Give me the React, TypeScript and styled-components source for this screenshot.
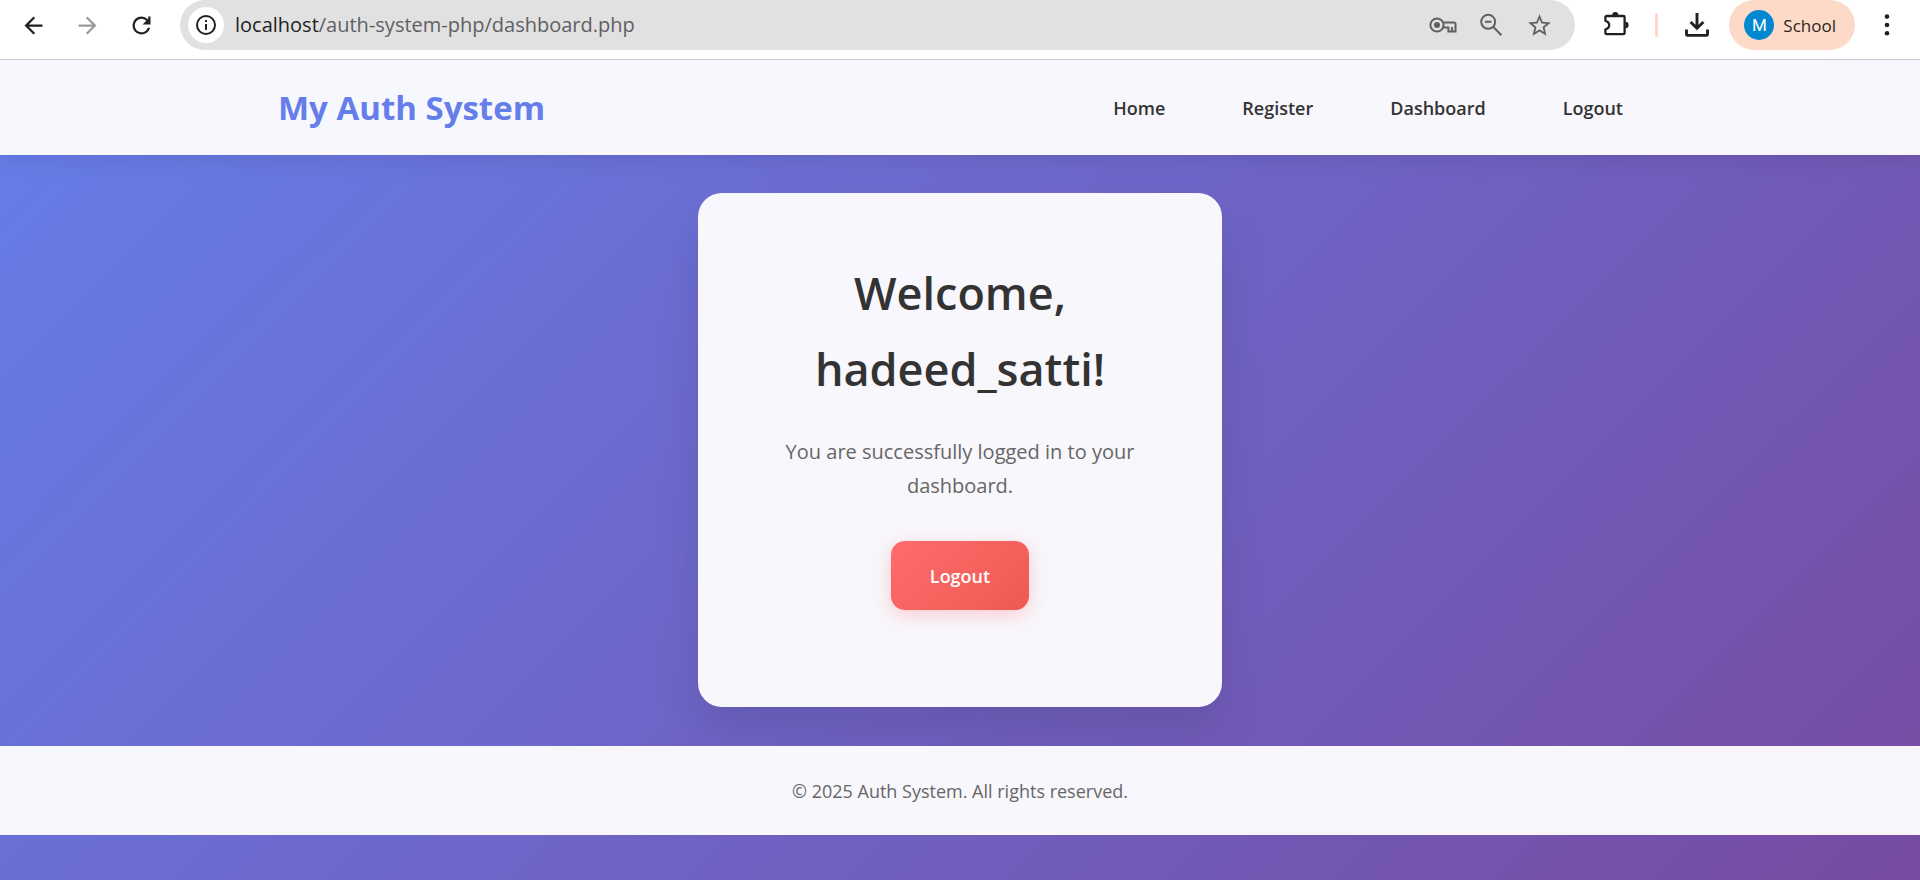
import React from "react";
import styled, { createGlobalStyle } from "styled-components";

const GlobalStyle = createGlobalStyle`
  * { box-sizing: border-box; margin: 0; padding: 0; }
  body {
    min-height: 100vh;
    font-family: "Open Sans", "Noto Sans", sans-serif;
    color: #333;
    background: #fff;
  }
  button { font: inherit; border: 0; background: none; cursor: pointer; }
  a { text-decoration: none; color: inherit; }
`;

const Browser = styled.div`
  min-height: 100vh;
  display: flex;
  flex-direction: column;
`;

const Toolbar = styled.div`
  position: relative;
  z-index: 1;
  height: 60px;
  padding: 0 19px 9px;
  display: flex;
  align-items: center;
  background: #fff;
  border-bottom: 1px solid #cbcbce;
`;

const ToolGroup = styled.div<{ $gap: number; $offset?: number }>`
  display: flex;
  align-items: center;
  gap: ${(p) => p.$gap}px;
  margin-left: ${(p) => p.$offset ?? 0}px;
`;

const IconButton = styled.button<{ $color?: string }>`
  display: flex;
  align-items: center;
  justify-content: center;
  width: 28px;
  height: 28px;
  color: ${(p) => p.$color ?? "#202124"};
`;

const AddressBar = styled.div`
  flex: 1;
  height: 50px;
  margin-left: 25px;
  padding: 0 22px 0 8px;
  display: flex;
  align-items: center;
  background: #e1e1e1;
  border-radius: 25px;
`;

const SiteInfo = styled.button`
  width: 36px;
  height: 36px;
  display: flex;
  align-items: center;
  justify-content: center;
  border-radius: 50%;
  background: #fff;
  color: #202124;
`;

const Url = styled.div`
  flex: 1;
  margin-left: 11px;
  font-size: 20px;
  line-height: 28px;
  color: #5f6063;
`;

const Host = styled.span`
  color: #1f1f1f;
`;

const Divider = styled.span`
  width: 3px;
  height: 24px;
  border-radius: 2px;
  background: #fddac7;
`;

const Profile = styled.button`
  height: 50px;
  padding: 0 19px 0 15px;
  display: flex;
  align-items: center;
  gap: 9px;
  border-radius: 25px;
  background: #fddac7;
  color: #2b2422;
  font-size: 17px;
`;

const Avatar = styled.span`
  width: 30px;
  height: 30px;
  display: flex;
  align-items: center;
  justify-content: center;
  border-radius: 50%;
  background: #0288d1;
  color: #fff;
  font-family: Roboto, sans-serif;
`;

const Page = styled.div`
  flex: 1;
  display: flex;
  flex-direction: column;
  background: linear-gradient(135deg, #667eea 0%, #764ba2 100%);
`;

const Header = styled.header`
  background: rgba(255, 255, 255, 0.95);
  box-shadow: 0 2px 24px rgba(0, 0, 0, 0.1);
`;

const HeaderInner = styled.div`
  max-width: 1440px;
  height: 95px;
  margin: 0 auto;
  padding: 0 38px;
  display: flex;
  align-items: center;
  justify-content: space-between;
`;

const Brand = styled.a`
  font-size: 33px;
  font-weight: 700;
  color: #667eea;
`;

const Nav = styled.nav`
  display: flex;
  gap: 39px;
`;

const NavLink = styled.a`
  padding: 8px 19px;
  font-size: 18px;
  font-weight: 600;
`;

const Main = styled.main`
  display: flex;
  justify-content: center;
  padding: 38px 38px 39px;
`;

const Card = styled.section`
  width: 524px;
  padding: 62px 77px 97px;
  display: flex;
  flex-direction: column;
  align-items: center;
  text-align: center;
  border-radius: 24px;
  background: rgba(255, 255, 255, 0.95);
  box-shadow: 0 24px 48px rgba(0, 0, 0, 0.1);
`;

const Title = styled.h1`
  font-size: 45px;
  line-height: 76px;
  font-weight: 600;
`;

const Message = styled.p`
  margin: 28px 0 38px;
  font-size: 20px;
  line-height: 34px;
  color: #666;
`;

const LogoutButton = styled.button`
  width: 138px;
  height: 69px;
  border-radius: 14px;
  background: linear-gradient(135deg, #ff6b6b, #ee5a52);
  box-shadow: 0 5px 18px rgba(255, 107, 107, 0.3);
  color: #fff;
  font-size: 18px;
  font-weight: 600;
`;

const Footer = styled.footer`
  height: 89px;
  display: flex;
  align-items: center;
  justify-content: center;
  background: rgba(255, 255, 255, 0.95);
  color: #666;
  font-size: 18px;
`;

const Icon = ({ size = 24, path }: { size?: number; path: string }) => (
  <svg width={size} height={size} viewBox="0 0 24 24" fill="currentColor" aria-hidden="true">
    <path d={path} />
  </svg>
);

const LineIcon = ({ weight = 2, children }: { weight?: number; children: React.ReactNode }) => (
  <svg
    width="28"
    height="28"
    viewBox="0 0 28 28"
    fill="none"
    stroke="currentColor"
    strokeWidth={weight}
    aria-hidden="true"
  >
    {children}
  </svg>
);

const KeyIcon = () => (
  <LineIcon>
    <circle cx="8" cy="14" r="6.6" />
    <circle cx="8" cy="14" r="3" fill="currentColor" stroke="none" />
    <path d="M14 11.4H25a1.5 1.5 0 0 1 1.5 1.5V20.6H19.4V16.4H14M23 20V16" />
  </LineIcon>
);

const ZoomOutIcon = () => (
  <LineIcon>
    <circle cx="11.2" cy="10.8" r="7" />
    <path d="M8 10.8h6.4M16.2 15.8l8.2 8.4" />
  </LineIcon>
);

const ExtensionsIcon = () => (
  <LineIcon weight={2.3}>
    <path
      strokeLinejoin="round"
      d="M4.6 5H21.4a1.2 1.2 0 0 1 1.2 1.2V21.9a1.2 1.2 0 0 1-1.2 1.2H4.6a1.2 1.2 0 0 1-1.2-1.2V18.4C6 17.8 7.2 16.2 7.2 14.1S6 10.4 3.4 9.8V6.2A1.2 1.2 0 0 1 4.6 5z"
    />
    <path fill="currentColor" stroke="none" d="M10.2 4.2a3.1 3.3 0 0 1 6.2 0zM23.4 10.8a3.2 3.3 0 0 1 0 6.6z" />
  </LineIcon>
);

const DownloadIcon = () => (
  <LineIcon weight={2.9}>
    <path d="M14 2v14.5M7.6 11l6.4 6.2 6.4-6.2M3.5 18.4v5a1 1 0 0 0 1 1h19a1 1 0 0 0 1-1v-5" />
  </LineIcon>
);

const MenuIcon = () => (
  <LineIcon>
    <g fill="currentColor" stroke="none">
      <circle cx="14" cy="5.6" r="2.3" />
      <circle cx="14" cy="14" r="2.3" />
      <circle cx="14" cy="22.2" r="2.3" />
    </g>
  </LineIcon>
);

const paths = {
  back: "M20 11H7.83l5.59-5.59L12 4l-8 8 8 8 1.41-1.41L7.83 13H20v-2z",
  forward: "M12 4l-1.41 1.41L16.17 11H4v2h12.17l-5.58 5.59L12 20l8-8z",
  reload: "M17.65 6.35A7.96 7.96 0 0 0 12 4a8 8 0 1 0 7.73 10h-2.08A6 6 0 1 1 12 6c1.66 0 3.14.69 4.22 1.78L13 11h7V4h-2v2.7z",
  info: "M11 7h2v2h-2zm0 4h2v6h-2zm1-9a10 10 0 1 0 0 20 10 10 0 0 0 0-20zm0 18a8 8 0 1 1 0-16 8 8 0 0 1 0 16z",
  star: "M22 9.24l-7.19-.62L12 2 9.19 8.63 2 9.24l5.46 4.73L5.82 21 12 17.27 18.18 21l-1.63-7.03zM12 15.4l-3.76 2.27 1-4.28-3.32-2.88 4.38-.38L12 6.1l1.71 4.04 4.38.38-3.32 2.88 1 4.28z",
};

const muted = "#5f6063";

export default function App() {
  return (
    <Browser>
      <GlobalStyle />
      <Toolbar>
        <ToolGroup $gap={26}>
          <IconButton aria-label="Back"><Icon size={27} path={paths.back} /></IconButton>
          <IconButton aria-label="Forward" $color="#9b9b9b"><Icon size={27} path={paths.forward} /></IconButton>
          <IconButton aria-label="Reload"><Icon size={27} path={paths.reload} /></IconButton>
        </ToolGroup>
        <AddressBar>
          <SiteInfo aria-label="Site information"><Icon path={paths.info} /></SiteInfo>
          <Url><Host>localhost</Host>/auth-system-php/dashboard.php</Url>
          <ToolGroup $gap={20}>
            <IconButton aria-label="Passwords" $color={muted}><KeyIcon /></IconButton>
            <IconButton aria-label="Zoom" $color={muted}><ZoomOutIcon /></IconButton>
            <IconButton aria-label="Bookmark" $color={muted}><Icon size={27} path={paths.star} /></IconButton>
          </ToolGroup>
        </AddressBar>
        <ToolGroup $gap={25} $offset={27}>
          <IconButton aria-label="Extensions"><ExtensionsIcon /></IconButton>
          <Divider />
          <IconButton aria-label="Downloads"><DownloadIcon /></IconButton>
        </ToolGroup>
        <ToolGroup $gap={18} $offset={18}>
          <Profile><Avatar>M</Avatar>School</Profile>
          <IconButton aria-label="Menu"><MenuIcon /></IconButton>
        </ToolGroup>
      </Toolbar>
      <Page>
        <Header>
          <HeaderInner>
            <Brand href="#">My Auth System</Brand>
            <Nav>
              <NavLink href="#home">Home</NavLink>
              <NavLink href="#register">Register</NavLink>
              <NavLink href="#dashboard">Dashboard</NavLink>
              <NavLink href="#logout">Logout</NavLink>
            </Nav>
          </HeaderInner>
        </Header>
        <Main>
          <Card>
            <Title>Welcome, hadeed_satti!</Title>
            <Message>You are successfully logged in to your dashboard.</Message>
            <LogoutButton>Logout</LogoutButton>
          </Card>
        </Main>
        <Footer>© 2025 Auth System. All rights reserved.</Footer>
      </Page>
    </Browser>
  );
}
